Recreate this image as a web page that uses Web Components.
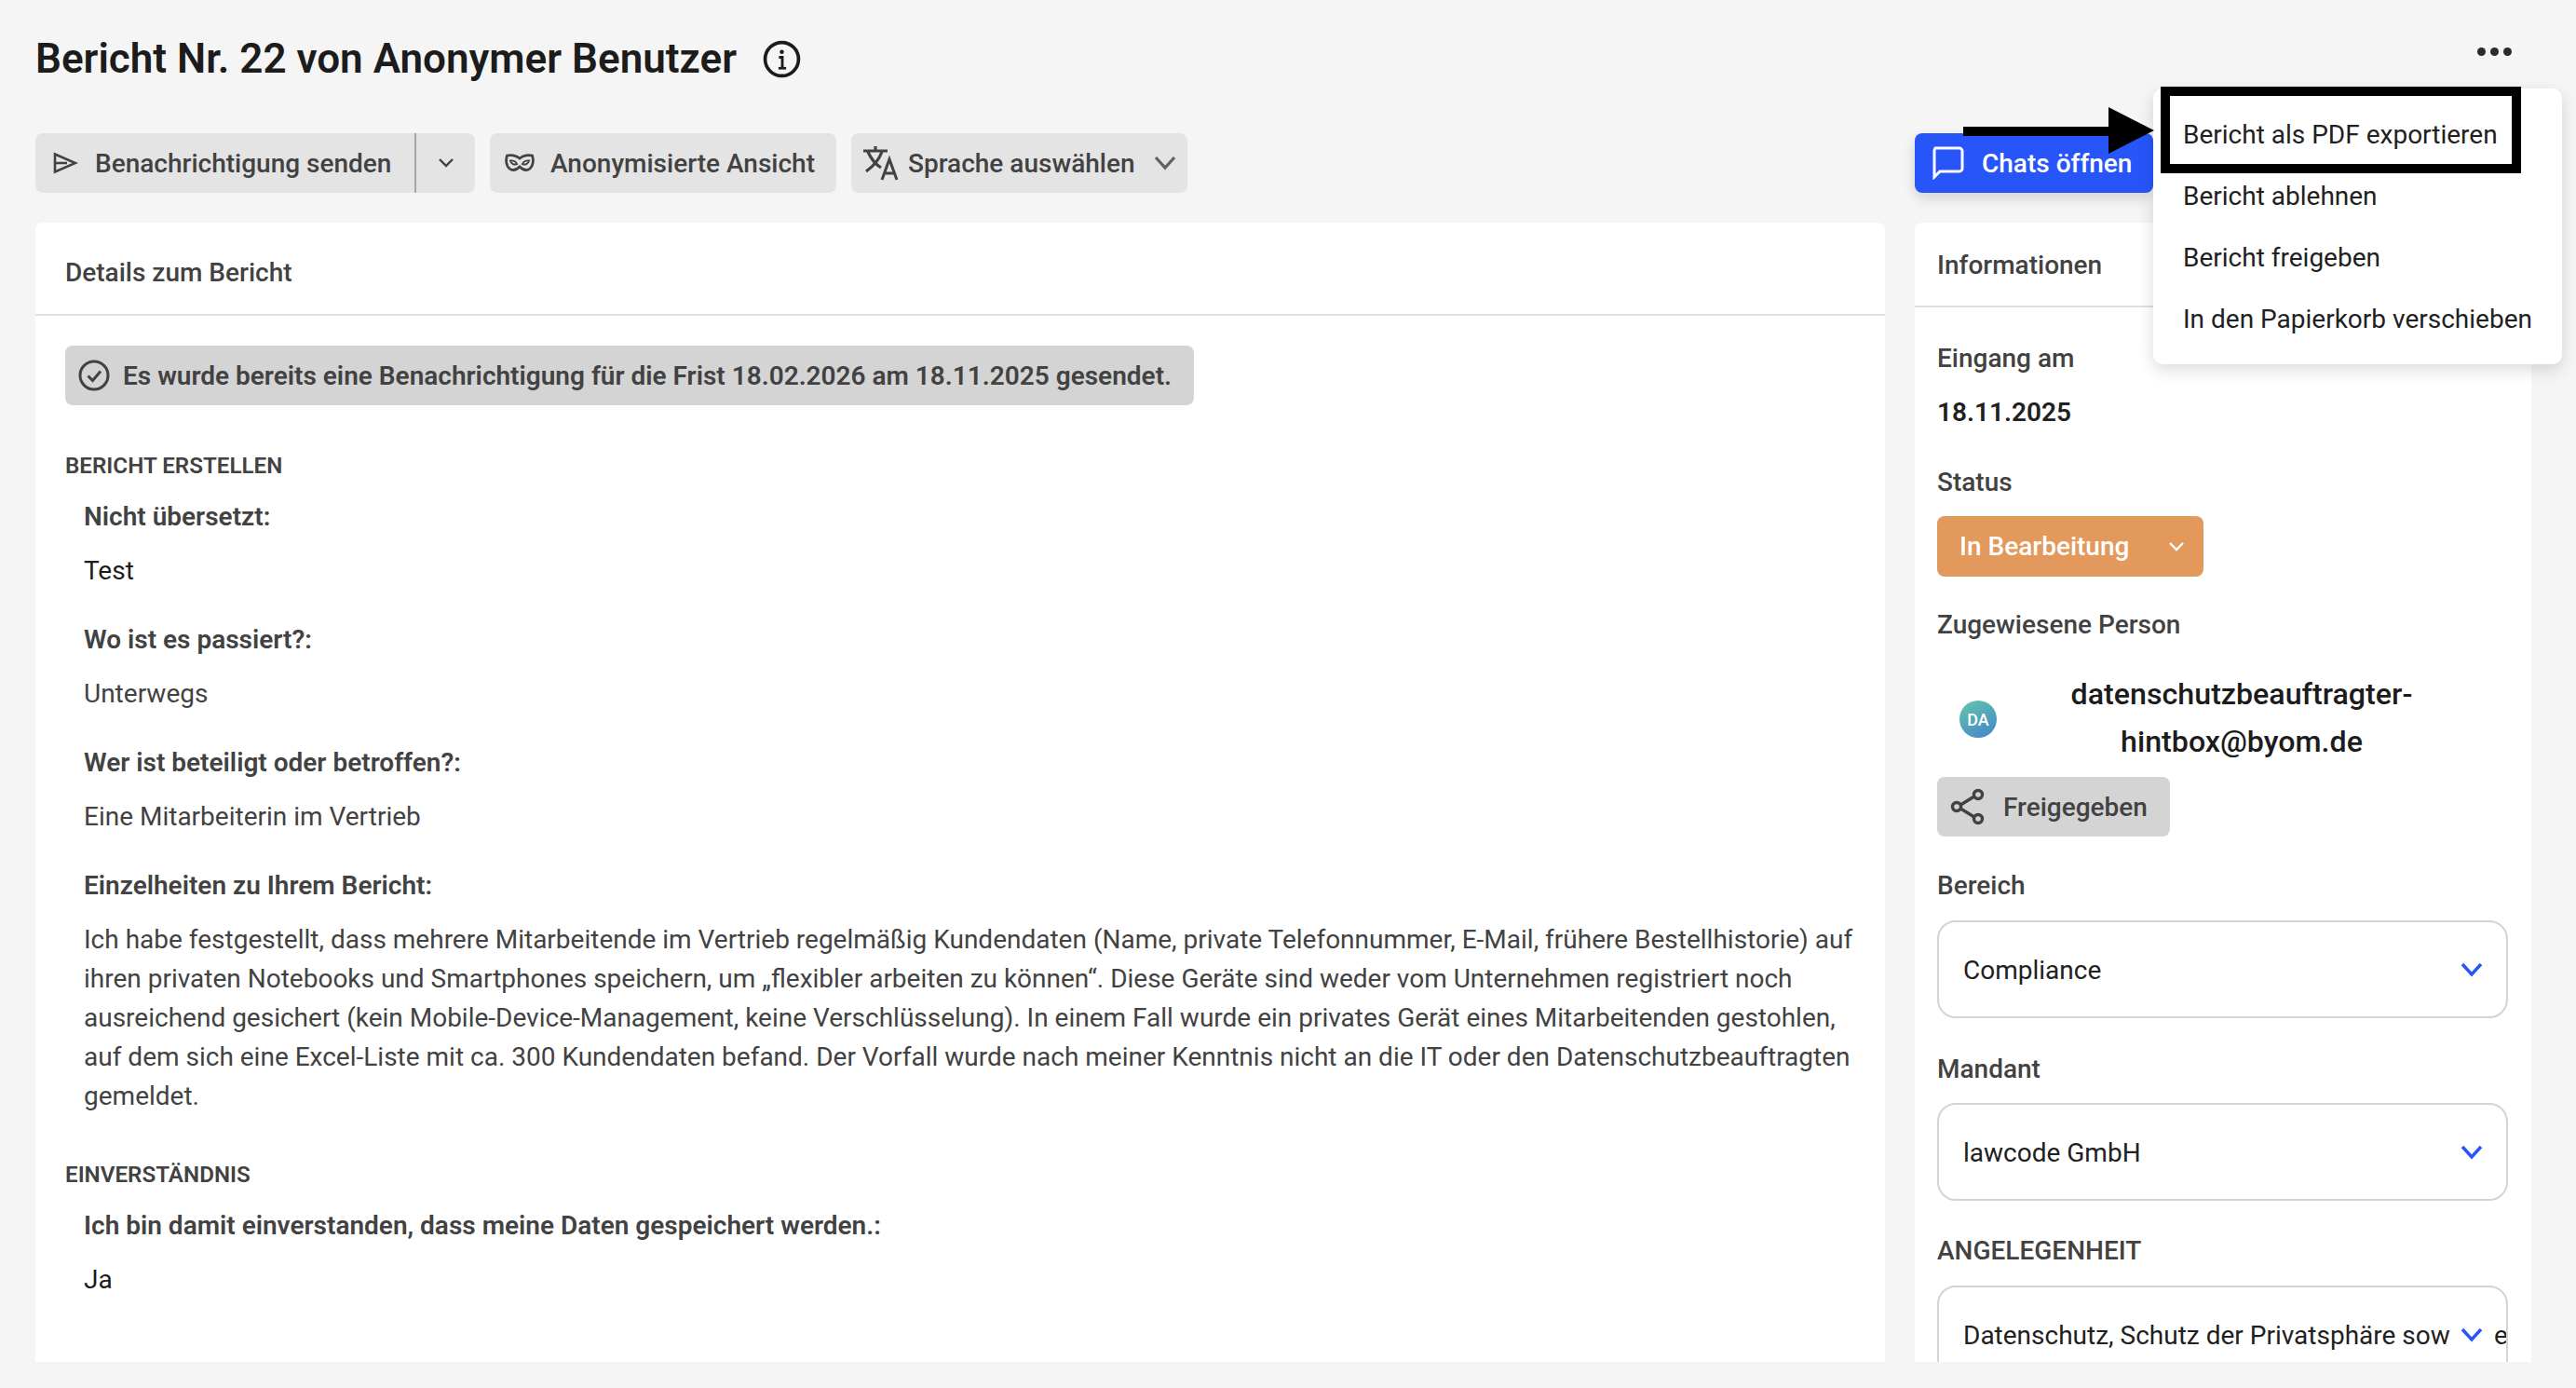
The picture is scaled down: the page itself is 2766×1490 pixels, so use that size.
<!DOCTYPE html>
<html lang="de">
<head>
<meta charset="utf-8">
<title>Bericht Nr. 22</title>
<style>
  html, body { margin: 0; padding: 0; background: #f5f5f5; }
  body { font-family: Roboto, "Liberation Sans", sans-serif; font-size: 28px; color: #424242; }
</style>
</head>
<body>

<report-page>
  <tool-button slot="tools" width="472" style="--gap:18px">
    <svg slot="icon" width="28" height="28" viewBox="0 0 28 28" style="margin-left:18px"><path d="M3 4.500 25 14 3 23.500V4.500ZM3 14H16" fill="none" stroke="#424242" stroke-width="2.600"/></svg>
    Benachrichtigung senden
    <svg slot="after" width="20" height="12" viewBox="0 0 20 12"><path d="M3 2l7 7 7-7" fill="none" stroke="#424242" stroke-width="2.400"/></svg>
  </tool-button>
  <tool-button slot="tools" width="372" style="--gap:17px">
    <svg slot="icon" width="32" height="20" viewBox="0 0 32 20" style="margin-left:16px"><path d="M16 5C12 1.500 6 1 2.500 2 .8 7 1.500 13 5 16c4 3 8 1 11-2 3 3 7 5 11 2 3.500-3 4.200-9 2.500-14C26 1 20 1.500 16 5Z" fill="none" stroke="#424242" stroke-width="2.800"/><path d="M6 7.500c3-.5 6 1 7 3.500-3 1.500-6 0-7-3.500ZM26 7.500c-3-.5-6 1-7 3.500 3 1.500 6 0 7-3.500Z" fill="none" stroke="#424242" stroke-width="2"/></svg>
    Anonymisierte Ansicht
  </tool-button>
  <tool-button slot="tools" width="361" tight style="--gap:9px">
    <svg slot="icon" width="40" height="38" viewBox="0 0 40 38" style="margin-left:12px"><path d="M1 6H27M14 1V6M6 7C10 16 15 21 20 24M21 7C18 15 11 23 4 28" fill="none" stroke="#424242" stroke-width="3.200"/><path d="M21 37 29 15 37 37M24 30H34" fill="none" stroke="#424242" stroke-width="3"/></svg>
    Sprache auswählen
    <svg slot="after" width="26" height="16" viewBox="0 0 26 16"><path d="M3 2l10 11L23 2" fill="none" stroke="#616161" stroke-width="3.200"/></svg>
  </tool-button>
  <chat-button slot="side">Chats öffnen</chat-button>

  <details-panel slot="main" heading="Details zum Bericht" head-height="100">
    <notice-bar>Es wurde bereits eine Benachrichtigung für die Frist 18.02.2026 am 18.11.2025 gesendet.</notice-bar>
    <report-section heading="BERICHT ERSTELLEN">
      <report-answer label="Nicht übersetzt:" dark>Test</report-answer>
      <report-answer label="Wo ist es passiert?:">Unterwegs</report-answer>
      <report-answer label="Wer ist beteiligt oder betroffen?:">Eine Mitarbeiterin im Vertrieb</report-answer>
      <report-answer label="Einzelheiten zu Ihrem Bericht:">Ich habe festgestellt, dass mehrere Mitarbeitende im Vertrieb regelmäßig Kundendaten (Name, private Telefonnummer, E-Mail, frühere Bestellhistorie) auf ihren privaten Notebooks und Smartphones speichern, um „flexibler arbeiten zu können“. Diese Geräte sind weder vom Unternehmen registriert noch ausreichend gesichert (kein Mobile-Device-Management, keine Verschlüsselung). In einem Fall wurde ein privates Gerät eines Mitarbeitenden gestohlen, auf dem sich eine Excel-Liste mit ca. 300 Kundendaten befand. Der Vorfall wurde nach meiner Kenntnis nicht an die IT oder den Datenschutzbeauftragten gemeldet.</report-answer>
    </report-section>
    <report-section heading="EINVERSTÄNDNIS" style="--top:45px">
      <report-answer label="Ich bin damit einverstanden, dass meine Daten gespeichert werden.:" dark>Ja</report-answer>
    </report-section>
  </details-panel>

  <details-panel slot="info" heading="Informationen" head-height="91" tight>
    <info-sidebar></info-sidebar>
  </details-panel>

  <action-menu slot="overlay">
    <span>Bericht als PDF exportieren</span>
    <span>Bericht ablehnen</span>
    <span>Bericht freigeben</span>
    <span>In den Papierkorb verschieben</span>
  </action-menu>
  <callout-mark slot="overlay"></callout-mark>
</report-page>

<script>
;(function(){

  const chevron = `<svg width="24" height="16" viewBox="0 0 24 16"><path d="M2 2l10 11L22 2" fill="none" stroke="#2755f9" stroke-width="3.400"/></svg>`;

  customElements.define('report-page', class extends HTMLElement {
    constructor() {
      super();
      this.attachShadow({ mode: 'open' });
      this.shadowRoot.innerHTML = /*html*/`
        <style>
          :host {
            display: block;
            position: relative;
            box-sizing: border-box;
            width: 2766px;
            height: 1490px;
            overflow: hidden;
            padding: 0 48px 28px 38px;
            background: #f5f5f5;
          }
          header {
            display: flex;
            align-items: center;
            height: 126px;
            margin-bottom: 17px;
          }
          h1 {
            margin: 0;
            font: 600 44px/46px Roboto, sans-serif;
            color: #1c1c1c;
          }
          .info { margin-left: 28px; flex: none; }
          .dots { display: flex; gap: 5px; margin-left: auto; margin-right: 21px; margin-top: -16px; }
          .dots i { width: 9px; height: 9px; border-radius: 50%; background: #2b2b2b; }
          .cols {
            display: grid;
            grid-template-columns: 1986px 662px;
            column-gap: 32px;
          }
          .tools { display: flex; gap: 16px; height: 64px; margin-bottom: 32px; }
          .side { height: 64px; }
          .panels { height: 1223px; }
        </style>
        <header>
          <h1>Bericht Nr. 22 von Anonymer Benutzer</h1>
          <svg class="info" width="41" height="41" viewBox="0 0 40 40"><circle cx="20" cy="20" r="17.500" fill="none" stroke="#1c1c1c" stroke-width="3.600"/><circle cx="20" cy="12.500" r="2.200" fill="#1c1c1c"/><path d="M17 18h3.500v11" fill="none" stroke="#1c1c1c" stroke-width="2.800"/><path d="M16.500 29.500h8" fill="none" stroke="#1c1c1c" stroke-width="2.600"/></svg>
          <div class="dots"><i></i><i></i><i></i></div>
        </header>
        <div class="cols">
          <div class="tools"><slot name="tools"></slot></div>
          <div class="side"><slot name="side"></slot></div>
          <div class="panels"><slot name="main"></slot></div>
          <div class="panels"><slot name="info"></slot></div>
        </div>
        <slot name="overlay"></slot>
      `;
    }
  });

  customElements.define('tool-button', class extends HTMLElement {
    constructor() {
      super();
      this.attachShadow({ mode: 'open' });
      this.shadowRoot.innerHTML = /*html*/`
        <style>
          :host {
            display: flex;
            align-items: center;
            box-sizing: border-box;
            height: 64px;
            border-radius: 8px;
            background: #e4e4e4;
            font-weight: 500;
            color: #424242;
            white-space: nowrap;
          }
          .label { margin-left: var(--gap, 21px); }
          .after { display: flex; margin-left: auto; margin-right: 11px; }
          .split { display: flex; align-items: center; justify-content: center; align-self: stretch; width: 65px; margin-left: auto; border-left: 2px solid #a6a6a6; box-sizing: border-box; }
          ::slotted(svg) { display: block; flex: none; }
        </style>
        <slot name="icon"></slot>
        <span class="label"><slot></slot></span>
        <span class="end"><slot name="after"></slot></span>
      `;
      this.style.width = this.getAttribute('width') + 'px';
      let end = this.shadowRoot.querySelector('.end');
      if (this.hasAttribute('tight')) {
        end.className = 'after';
      } else if (this.querySelector('[slot=after]')) {
        end.className = 'split';
      }
    }
  });

  customElements.define('chat-button', class extends HTMLElement {
    constructor() {
      super();
      this.attachShadow({ mode: 'open' });
      this.shadowRoot.innerHTML = /*html*/`
        <style>
          :host {
            display: flex;
            align-items: center;
            box-sizing: border-box;
            width: 256px;
            height: 64px;
            padding-left: 19px;
            border-radius: 8px;
            background: #2755f9;
            box-shadow: 0 6px 14px rgba(0,0,0,.14);
            color: #fff;
            font-weight: 500;
            white-space: nowrap;
          }
          svg { margin-right: 19px; flex: none; }
        </style>
        <svg width="34" height="36" viewBox="0 0 34 36"><path d="M3 2H29C30.500 2 32 3.500 32 5V24C32 25.500 30.500 27 29 27H8L2 33V5C2 3.500 3 2 3 2Z" fill="none" stroke="#fff" stroke-width="3"/></svg>
        <slot></slot>
      `;
    }
  });

  customElements.define('details-panel', class extends HTMLElement {
    constructor() {
      super();
      this.attachShadow({ mode: 'open' });
      this.shadowRoot.innerHTML = /*html*/`
        <style>
          :host {
            display: block;
            height: 100%;
            overflow: hidden;
            border-radius: 8px 8px 0 0;
            background: #fff;
          }
          .head {
            display: flex;
            align-items: center;
            box-sizing: border-box;
            padding: 9px 0 0 32px;
            border-bottom: 2px solid #e0e0e0;
            font-weight: 500;
            color: #424242;
          }
          :host([tight]) .head { padding: 1px 0 0 24px; }
          .body { padding: 32px 32px 0; }
          :host([tight]) .body { padding: 0; }
        </style>
        <div class="head"></div>
        <div class="body"><slot></slot></div>
      `;
      let head = this.shadowRoot.querySelector('.head');
      head.textContent = this.getAttribute('heading');
      head.style.height = this.getAttribute('head-height') + 'px';
    }
  });

  customElements.define('notice-bar', class extends HTMLElement {
    constructor() {
      super();
      this.attachShadow({ mode: 'open' });
      this.shadowRoot.innerHTML = /*html*/`
        <style>
          :host {
            display: inline-flex;
            align-items: center;
            box-sizing: border-box;
            height: 64px;
            padding: 0 24px 0 14px;
            border-radius: 8px;
            background: #d4d4d4;
            font-weight: 600;
            color: #424242;
            white-space: nowrap;
          }
          svg { margin-right: 14px; flex: none; }
        </style>
        <svg width="34" height="34" viewBox="0 0 34 34"><circle cx="17" cy="17" r="15" fill="none" stroke="#424242" stroke-width="3"/><path d="M10.500 17.500l5 5 8.500-10" fill="none" stroke="#424242" stroke-width="3"/></svg>
        <slot></slot>
      `;
    }
  });

  customElements.define('report-section', class extends HTMLElement {
    constructor() {
      super();
      this.attachShadow({ mode: 'open' });
      this.shadowRoot.innerHTML = /*html*/`
        <style>
          :host { display: block; }
          h2 {
            margin: var(--top, 47px) 0 16px;
            font: 600 24.200px/36px Roboto, sans-serif;
            color: #424242;
          }
          .list { display: flex; flex-direction: column; gap: 32px; padding-left: 20px; }
        </style>
        <h2></h2>
        <div class="list"><slot></slot></div>
      `;
      this.shadowRoot.querySelector('h2').textContent = this.getAttribute('heading');
    }
  });

  customElements.define('report-answer', class extends HTMLElement {
    constructor() {
      super();
      this.attachShadow({ mode: 'open' });
      this.shadowRoot.innerHTML = /*html*/`
        <style>
          :host { display: block; line-height: 42px; }
          .q { font-weight: 600; color: #424242; margin-bottom: 16px; }
          .a { color: #424242; }
          :host([dark]) .a { color: #1c1c1c; }
        </style>
        <div class="q"></div>
        <div class="a"><slot></slot></div>
      `;
      this.shadowRoot.querySelector('.q').textContent = this.getAttribute('label');
    }
  });

  customElements.define('status-button', class extends HTMLElement {
    constructor() {
      super();
      this.attachShadow({ mode: 'open' });
      this.shadowRoot.innerHTML = /*html*/`
        <style>
          :host {
            display: flex;
            align-items: center;
            justify-content: space-between;
            box-sizing: border-box;
            width: 286px;
            height: 65px;
            padding: 0 20px 0 24px;
            border-radius: 8px;
            background: #e4995c;
            color: #fff;
            font-weight: 500;
            white-space: nowrap;
          }
        </style>
        <slot></slot>
        <svg width="18" height="12" viewBox="0 0 18 12"><path d="M2 2l7 7 7-7" fill="none" stroke="#fff" stroke-width="2.400"/></svg>
      `;
    }
  });

  customElements.define('field-select', class extends HTMLElement {
    constructor() {
      super();
      this.attachShadow({ mode: 'open' });
      this.shadowRoot.innerHTML = /*html*/`
        <style>
          :host {
            display: flex;
            align-items: center;
            box-sizing: border-box;
            width: 613px;
            height: 105px;
            padding: 0 25px 0 26px;
            border: 2px solid #d4d4d4;
            border-radius: 20px;
            overflow: hidden;
            color: #212121;
            white-space: nowrap;
          }
          .text { flex: 1; min-width: 0; overflow: hidden; padding-top: 2px; }
          svg { flex: none; }
          .tail { width: 0; margin: 2px -12px 0 12px; }
        </style>
        <span class="text"><slot></slot></span>
        ${chevron}
        <span class="tail"></span>
      `;
      this.shadowRoot.querySelector('.tail').textContent = this.getAttribute('tail') || '';
    }
  });

  customElements.define('info-sidebar', class extends HTMLElement {
    constructor() {
      super();
      this.attachShadow({ mode: 'open' });
      this.shadowRoot.innerHTML = /*html*/`
        <style>
          :host { display: block; padding: 34px 25px 0 24px; }
          .label { font-weight: 500; color: #424242; line-height: 42px; }
          .date { font-weight: 600; color: #212121; line-height: 42px; margin-top: 16px; }
          .person {
            display: flex;
            align-items: center;
            height: 104px;
            margin-top: 28px;
          }
          .avatar {
            display: flex;
            align-items: center;
            justify-content: center;
            width: 40px;
            height: 40px;
            margin-left: 24px;
            border-radius: 50%;
            background: linear-gradient(150deg, #63c7a6, #4483cf);
            color: #fff;
            font-size: 18px;
            font-weight: 500;
            flex: none;
          }
          .name {
            flex: 1;
            padding: 0 49px 2px 26px;
            text-align: center;
            font-size: 32.200px;
            font-weight: 500;
            line-height: 51px;
            color: #1c1c1c;
          }
          .shared {
            display: flex;
            align-items: center;
            box-sizing: border-box;
            width: 250px;
            height: 64px;
            margin-top: 10px;
            padding-left: 14px;
            border-radius: 8px;
            background: #d4d4d4;
            font-weight: 500;
            color: #424242;
          }
          .shared svg { margin-right: 19px; }
          status-button { margin-top: 15px; }
          field-select { margin-top: 16px; }
        </style>
        <div class="label">Eingang am</div>
        <div class="date">18.11.2025</div>
        <div class="label" style="margin-top:33px">Status</div>
        <status-button>In Bearbeitung</status-button>
        <div class="label" style="margin-top:31px">Zugewiesene Person</div>
        <div class="person">
          <div class="avatar">DA</div>
          <div class="name">datenschutzbeauftragter-hintbox@byom.de</div>
        </div>
        <div class="shared">
          <svg width="38" height="40" viewBox="0 0 38 40"><path d="M29 7 8 20 29 33" fill="none" stroke="#424242" stroke-width="3.400"/><circle cx="30" cy="7" r="4.500" fill="#d4d4d4" stroke="#424242" stroke-width="3.400"/><circle cx="7" cy="20" r="4.500" fill="#d4d4d4" stroke="#424242" stroke-width="3.400"/><circle cx="30" cy="33" r="4.500" fill="#d4d4d4" stroke="#424242" stroke-width="3.400"/></svg>
          Freigegeben
        </div>
        <div class="label" style="margin-top:32px">Bereich</div>
        <field-select>Compliance</field-select>
        <div class="label" style="margin-top:34px">Mandant</div>
        <field-select style="margin-top:15px">lawcode GmbH</field-select>
        <div class="label" style="margin-top:33px">ANGELEGENHEIT</div>
        <field-select tail="e">Datenschutz, Schutz der Privatsphäre sow</field-select>
      `;
    }
  });

  customElements.define('action-menu', class extends HTMLElement {
    constructor() {
      super();
      this.attachShadow({ mode: 'open' });
      this.shadowRoot.innerHTML = /*html*/`
        <style>
          :host {
            position: absolute;
            left: 2312px;
            top: 95px;
            display: flex;
            flex-direction: column;
            box-sizing: border-box;
            width: 439px;
            height: 296px;
            padding: 17px 0 15px 32px;
            border-radius: 10px;
            background: #fff;
            box-shadow: 0 6px 18px rgba(0,0,0,.14);
            color: #212121;
            white-space: nowrap;
          }
          ::slotted(span) { display: block; line-height: 66px; }
        </style>
        <slot></slot>
      `;
    }
  });

  // the black box and arrow drawn over the screenshot
  customElements.define('callout-mark', class extends HTMLElement {
    constructor() {
      super();
      this.attachShadow({ mode: 'open' });
      this.shadowRoot.innerHTML = /*html*/`
        <style>
          .box { position: absolute; left: 2320px; top: 93px; width: 387px; height: 93px; box-sizing: border-box; border: 10px solid #000; }
          svg { position: absolute; left: 2108px; top: 115px; }
        </style>
        <div class="box"></div>
        <svg width="206" height="50" viewBox="0 0 206 50"><path d="M0 21H156V0L205 25 156 50V31H0Z" fill="#000"/></svg>
      `;
    }
  });

})();
</script>
</body>
</html>
